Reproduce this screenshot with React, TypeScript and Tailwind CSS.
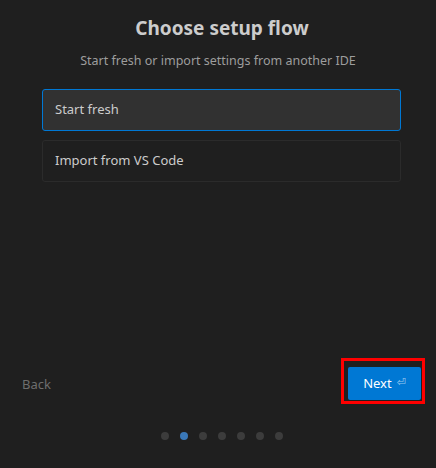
const font = { fontFamily: '"Noto Sans", "Open Sans", sans-serif' }

const steps = [0, 1, 2, 3, 4, 5, 6]

export default function App() {
  return (
    <div className="w-[436px] h-[468px] bg-[#1f1f1f] flex flex-col" style={font}>
      {/* header */}
      <div className="flex flex-col items-center pt-[14px] pl-[8px]">
        <h1 className="text-[19px] leading-[28px] font-bold text-[#cccccc]">Choose setup flow</h1>
        <p className="mt-[10px] -ml-[8px] text-[12.5px] leading-[18px] text-[#9d9d9d]">
          Start fresh or import settings from another IDE
        </p>
      </div>

      {/* options */}
      <div className="flex flex-col gap-[9px] pl-[42px] pr-[35px] mt-[19px]">
        <button className="h-[42px] w-full text-left px-[12px] rounded-[3px] border border-[#0078d4] bg-[#313131] text-[13px] text-[#cccccc]">
          Start fresh
        </button>
        <button className="h-[42px] w-full text-left px-[12px] rounded-[3px] border border-[#2b2b2b] bg-[#1f1f1f] text-[13px] text-[#cccccc]">
          Import from VS Code
        </button>
      </div>

      <div className="flex-1" />

      {/* footer */}
      <div className="flex items-center justify-between pl-[22px] pr-[15px]">
        <span className="text-[13px] text-[#6e6e6e] pt-[2px]">Back</span>
        <div className="relative">
          <button className="flex items-center gap-[5px] h-[33px] w-[73px] justify-center rounded-[2px] bg-[#0078d4] text-[13px] text-white">
            Next
            <span className="text-[11px] text-[#9ccaf0]" style={{ fontFamily: '"DejaVu Sans", sans-serif' }}>⏎</span>
          </button>
          <span className="absolute left-[-7px] top-[-9px] right-[-4px] bottom-[-4px] border-[3px] border-[#ff0000] pointer-events-none" />
        </div>
      </div>

      <div className="flex justify-center gap-[11px] pt-[32px] pb-[28px] pl-[7px]">
        {steps.map((i) => (
          <div
            key={i}
            className={i === 1 ? 'w-[8px] h-[8px] rounded-full bg-[#3a78b8]' : 'w-[8px] h-[8px] rounded-full bg-[#3c3c3c]'}
          />
        ))}
      </div>
    </div>
  )
}
